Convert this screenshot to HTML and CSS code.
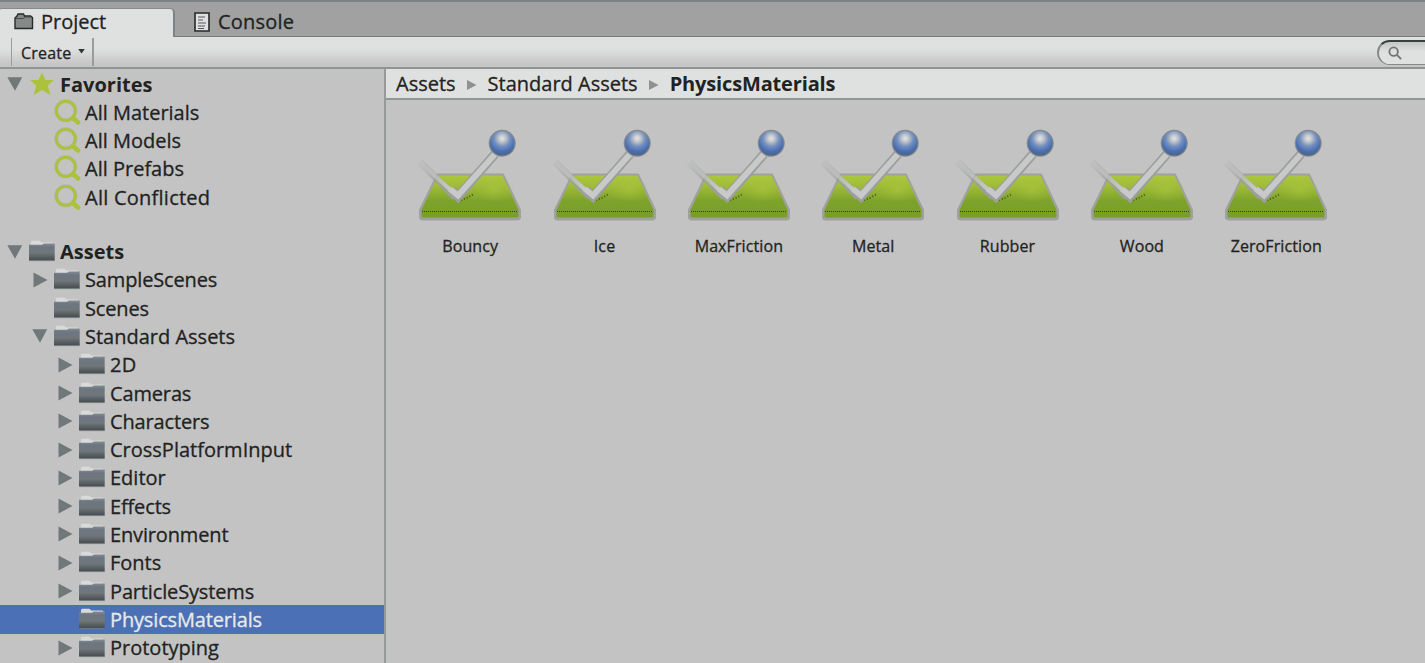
FILE: index.html
```html
<!DOCTYPE html>
<html lang="en">
<head>
<meta charset="utf-8">
<title>Project</title>
<link rel="stylesheet" href="styles.css">
</head>
<body>
<svg class="defs" aria-hidden="true">
  <defs>
    <linearGradient id="folderFill" x1="0" y1="0" x2="0" y2="1"><stop offset="0" stop-color="#858d92"/><stop offset=".2" stop-color="#6d7681"/><stop offset=".55" stop-color="#6f777a"/><stop offset="1" stop-color="#454b4e"/></linearGradient>
    <linearGradient id="grass" x1="0" y1="0" x2="0" y2="1"><stop offset="0" stop-color="#adc63e"/><stop offset=".25" stop-color="#a0bc37"/><stop offset=".6" stop-color="#7ea32b"/><stop offset="1" stop-color="#789e29"/></linearGradient>
    <radialGradient id="ball" cx=".5" cy=".3" r=".68"><stop offset="0" stop-color="#e3e5e5"/><stop offset=".2" stop-color="#c4c7cb"/><stop offset=".48" stop-color="#7590bd"/><stop offset=".78" stop-color="#4a6fb4"/><stop offset="1" stop-color="#4d6487"/></radialGradient>
    <linearGradient id="tail" gradientUnits="userSpaceOnUse" x1="10" y1="42" x2="40" y2="68"><stop offset="0" stop-color="#9c9f9e" stop-opacity=".15"/><stop offset="1" stop-color="#9c9f9e"/></linearGradient>
    <linearGradient id="tailIn" gradientUnits="userSpaceOnUse" x1="10" y1="42" x2="42" y2="70"><stop offset="0" stop-color="#c5c6c6" stop-opacity=".2"/><stop offset="1" stop-color="#c9cbca"/></linearGradient>
    <radialGradient id="glow"><stop offset="0" stop-color="#b2ca40" stop-opacity=".5"/><stop offset="1" stop-color="#a5c03a" stop-opacity="0"/></radialGradient>
  </defs>
  <symbol id="folder" viewBox="0 0 26 22">
    <path d="M2 5V2.200Q2 .8 3.500 .8H10Q11.500 .8 12 2.500H23.500Q24.500 2.500 24.500 5Z" fill="#d9dbda"/>
    <path d="M0 4.800H13L15 3.500H25.700V20.600H0Z" fill="url(#folderFill)"/>
    <path d="M.5 20.600H25.500" stroke="#747b7d"/>
  </symbol>
  <symbol id="lens" viewBox="0 0 28 27">
    <circle cx="11.800" cy="11.800" r="9.600" fill="none" stroke="#b2b5aa" stroke-width="3.800"/>
    <circle cx="11.800" cy="11.800" r="9.500" fill="none" stroke="#adc23c" stroke-width="2.800"/>
    <path d="M17.500 18L19.500 20" stroke="#adc23c" stroke-width="4"/>
    <path d="M19.500 19.500L24 23.500" stroke="#adc23c" stroke-width="4.800" stroke-linecap="round"/>
  </symbol>
  <symbol id="down" viewBox="0 0 16 14"><path d="M.3 .3H15.200L8 13.700Z" fill="#70787a"/></symbol>
  <symbol id="right" viewBox="0 0 16 16"><path d="M1.500 .5V15.500L15.500 8Z" fill="#70787a"/></symbol>
  <symbol id="material" viewBox="0 0 120 110">
    <path d="M27.500 54.500H93L110 90V97Q110 99.500 107 99.500H13Q10 99.500 10 97V90Z" fill="#9fa19f" stroke="#9fa19f" stroke-width="2" stroke-linejoin="round"/>
    <path d="M28 55.500H92.500L108.500 90V96Q108.500 97.500 106.500 97.500H13.500Q11.500 97.500 11.500 96V90Z" fill="url(#grass)"/>
    <ellipse cx="84" cy="70" rx="20" ry="13" fill="url(#glow)"/>
    <path d="M12 91.500H108" stroke="#30401c" stroke-dasharray="1 1"/>
    <path d="M51 80L58 77.500L64 74" fill="none" stroke="#43561f" stroke-width="2" stroke-dasharray="1 2"/>
    <path d="M10 42L45 77" fill="none" stroke="url(#tail)" stroke-width="7"/>
    <path d="M10 42L47 76" fill="none" stroke="url(#tailIn)" stroke-width="4"/>
    <path d="M41 70L48 76.500L85 34" fill="none" stroke="#9c9f9d" stroke-width="9.500"/>
    <path d="M40 69L48 75.500L86 33" fill="none" stroke="#c8cac9" stroke-width="5.800"/>
    <circle cx="92.200" cy="23.300" r="13.500" fill="#858b8d"/>
    <circle cx="92.200" cy="23.300" r="12.300" fill="url(#ball)"/>
  </symbol>
</svg>

<div class="window">
  <header class="tabs">
    <div class="tab tab-active">
      <svg class="tab-folder" viewBox="0 0 20 17"><path d="M1 5V15.500H18.500V4.500L16.500 3H10.500L9.500 1H4L3 3Z" fill="#858988" stroke="#252a2a" stroke-width="1.400"/><path d="M2 5.500H9L11 4H17" fill="none" stroke="#454a4a"/></svg>
      <span>Project</span>
    </div>
    <div class="tab tab-console">
      <svg class="tab-doc" viewBox="0 0 16 20"><path d="M1 1H15V19H1Z" fill="#dfe1e0" stroke="#252a2a" stroke-width="1.600"/><path d="M4 5H11M4 8H9M4 11H12M4 14H11M4 16.500H10" stroke="#555b5b" stroke-width="1.200"/></svg>
      <span>Console</span>
    </div>
  </header>

  <div class="toolbar">
    <div class="create"><span>Create</span><svg class="caret" viewBox="0 0 8 6"><path d="M0 0H8L4 5.500Z" fill="#303535"/></svg></div>
    <div class="search"><svg viewBox="0 0 16 16"><circle cx="6" cy="6" r="4.500" fill="none" stroke="#707676" stroke-width="2"/><path d="M9.500 9.500L14 14" stroke="#707676" stroke-width="2"/></svg></div>
  </div>

  <div class="panes">
    <nav class="tree">
      <div class="row root"><svg class="arrow"><use href="#down"/></svg><svg class="star" viewBox="0 0 26 24"><path d="M13 .5L16.500 8H25L18.800 13.500L21.500 23L13 18L4.500 23L7.200 13.500L1 8H9.500Z" fill="#adc23c"/></svg><b>Favorites</b></div>
      <div class="row level1"><svg class="lens"><use href="#lens"/></svg><span>All Materials</span></div>
      <div class="row level1"><svg class="lens"><use href="#lens"/></svg><span>All Models</span></div>
      <div class="row level1"><svg class="lens"><use href="#lens"/></svg><span>All Prefabs</span></div>
      <div class="row level1"><svg class="lens"><use href="#lens"/></svg><span class="loose">All Conflicted</span></div>
      <div class="row root assets"><svg class="arrow"><use href="#down"/></svg><svg class="folder"><use href="#folder"/></svg><b>Assets</b></div>
      <div class="row level1"><svg class="arrow side"><use href="#right"/></svg><svg class="folder"><use href="#folder"/></svg><span class="tight">SampleScenes</span></div>
      <div class="row level1"><svg class="folder"><use href="#folder"/></svg><span class="tight">Scenes</span></div>
      <div class="row level1"><svg class="arrow"><use href="#down"/></svg><svg class="folder"><use href="#folder"/></svg><span>Standard Assets</span></div>
      <div class="row level2"><svg class="arrow side"><use href="#right"/></svg><svg class="folder"><use href="#folder"/></svg><span class="loose">2D</span></div>
      <div class="row level2"><svg class="arrow side"><use href="#right"/></svg><svg class="folder"><use href="#folder"/></svg><span class="tight">Cameras</span></div>
      <div class="row level2"><svg class="arrow side"><use href="#right"/></svg><svg class="folder"><use href="#folder"/></svg><span class="tight">Characters</span></div>
      <div class="row level2"><svg class="arrow side"><use href="#right"/></svg><svg class="folder"><use href="#folder"/></svg><span>CrossPlatformInput</span></div>
      <div class="row level2"><svg class="arrow side"><use href="#right"/></svg><svg class="folder"><use href="#folder"/></svg><span>Editor</span></div>
      <div class="row level2"><svg class="arrow side"><use href="#right"/></svg><svg class="folder"><use href="#folder"/></svg><span class="tight">Effects</span></div>
      <div class="row level2"><svg class="arrow side"><use href="#right"/></svg><svg class="folder"><use href="#folder"/></svg><span class="tight">Environment</span></div>
      <div class="row level2"><svg class="arrow side"><use href="#right"/></svg><svg class="folder"><use href="#folder"/></svg><span>Fonts</span></div>
      <div class="row level2"><svg class="arrow side"><use href="#right"/></svg><svg class="folder"><use href="#folder"/></svg><span class="tight">ParticleSystems</span></div>
      <div class="row level2 selected"><svg class="folder"><use href="#folder"/></svg><span class="tight">PhysicsMaterials</span></div>
      <div class="row level2"><svg class="arrow side"><use href="#right"/></svg><svg class="folder"><use href="#folder"/></svg><span>Prototyping</span></div>
    </nav>
    <main class="content">
      <div class="crumbs">
        <span>Assets</span><svg class="sep" viewBox="0 0 10 10"><path d="M0 0V10L9.500 5Z" fill="#8d9190"/></svg>
        <span>Standard Assets</span><svg class="sep" viewBox="0 0 10 10"><path d="M0 0V10L9.500 5Z" fill="#8d9190"/></svg>
        <b class="tight">PhysicsMaterials</b>
      </div>
      <div class="grid">
        <div class="item"><svg><use href="#material"/></svg><span>Bouncy</span></div>
        <div class="item"><svg><use href="#material"/></svg><span>Ice</span></div>
        <div class="item"><svg><use href="#material"/></svg><span>MaxFriction</span></div>
        <div class="item"><svg><use href="#material"/></svg><span>Metal</span></div>
        <div class="item"><svg><use href="#material"/></svg><span>Rubber</span></div>
        <div class="item"><svg><use href="#material"/></svg><span>Wood</span></div>
        <div class="item"><svg><use href="#material"/></svg><span>ZeroFriction</span></div>
      </div>
    </main>
  </div>
</div>
</body>
</html>
```
FILE: styles.css
```css
* { box-sizing: border-box; }
body { margin: 0; overflow: hidden; background: #c3c3c3; color: #1f2322; font-family: "Open Sans", "Noto Sans", sans-serif; font-size: 20px; font-variant-ligatures: none; -webkit-text-stroke: .3px; }
svg { display: block; flex: none; }
b { font-weight: 700; -webkit-text-stroke: 0; }
span, b { white-space: nowrap; }
.tight { letter-spacing: -.15px; }
.loose { letter-spacing: .25px; }
.defs { position: absolute; width: 0; height: 0; }
.window { display: flex; flex-direction: column; width: 1425px; height: 663px; }

.tabs { display: flex; align-items: flex-end; height: 37px; flex: none; background: #a0a1a0; border-top: 2px solid #7d8384; box-shadow: inset 0 -1px #747b7d; }
.tab { display: flex; align-items: center; height: 29px; }
.tab-active { width: 175px; padding: 0 0 3px 14px; gap: 7px; background: #dfe1e0; border-top: 1px solid #858a8a; border-right: 2px solid #7e8485; border-radius: 2px 5px 0 0; }
.tab-console { padding: 0 0 2px 19px; gap: 8px; letter-spacing: .2px; }
.tab-folder { width: 20px; height: 17px; }
.tab-doc { width: 16px; height: 20px; }

.toolbar { display: flex; justify-content: space-between; align-items: center; height: 32px; flex: none; background: linear-gradient(#dfe1e0 40%, #c5c6c5 90%); border-bottom: 2px solid #8f9392; }
.create { display: flex; align-items: center; gap: 7px; width: 83px; height: 28px; margin-left: 11px; padding: 2px 0 0 9px; border: solid #9a9d9c; border-width: 0 2px 0 1px; font-size: 16px; letter-spacing: .2px; }
.caret { width: 7px; height: 5px; margin-top: -4px; }
.search { width: 48px; height: 25px; padding: 4px 0 0 9px; background: linear-gradient(#c5c7c6, #dfe1e0 45%); border: 1px solid #858a89; border-width: 2px 0 1px 2px; border-top-color: #393f3f; border-radius: 13px 0 0 13px; }
.search svg { width: 15px; height: 15px; }

.panes { display: flex; flex: 1; min-height: 0; }
.tree { width: 384px; padding-top: .9px; flex: none; }
.row { display: flex; align-items: center; height: 28.3px; }
.row span, .row b { margin-left: 5px; }
.root { padding-left: 7px; }
.level1 { padding-left: 54px; }
.level2 { padding-left: 79px; }
.assets { margin-top: 26px; }
.arrow { width: 16px; height: 14px; margin-right: 6px; }
.arrow.side { height: 16px; }
.level1 .arrow, .level2 .arrow { margin-left: -22px; }
.folder { width: 26px; height: 22px; margin-top: -1px; }
.star { width: 26px; height: 24px; }
.lens { width: 28px; height: 27px; margin-right: -2px; }
.selected { background: #4b70b5; color: #e8eaea; }

.content { flex: 1; border-left: 2px solid #969a99; }
.crumbs { display: flex; align-items: center; height: 31px; padding-left: 10px; background: #dfe1e0; border-bottom: 2px solid #929695; }
.sep { width: 10px; height: 10px; margin: 2px 11px 0; }
.grid { display: flex; padding: 20px 0 0 17px; }
.item { display: flex; flex-direction: column; align-items: center; width: 134.350px; font-size: 16px; letter-spacing: .1px; }
.item svg { width: 120px; height: 110px; }
.item span { margin-top: 5px; line-height: 22px; }
```
